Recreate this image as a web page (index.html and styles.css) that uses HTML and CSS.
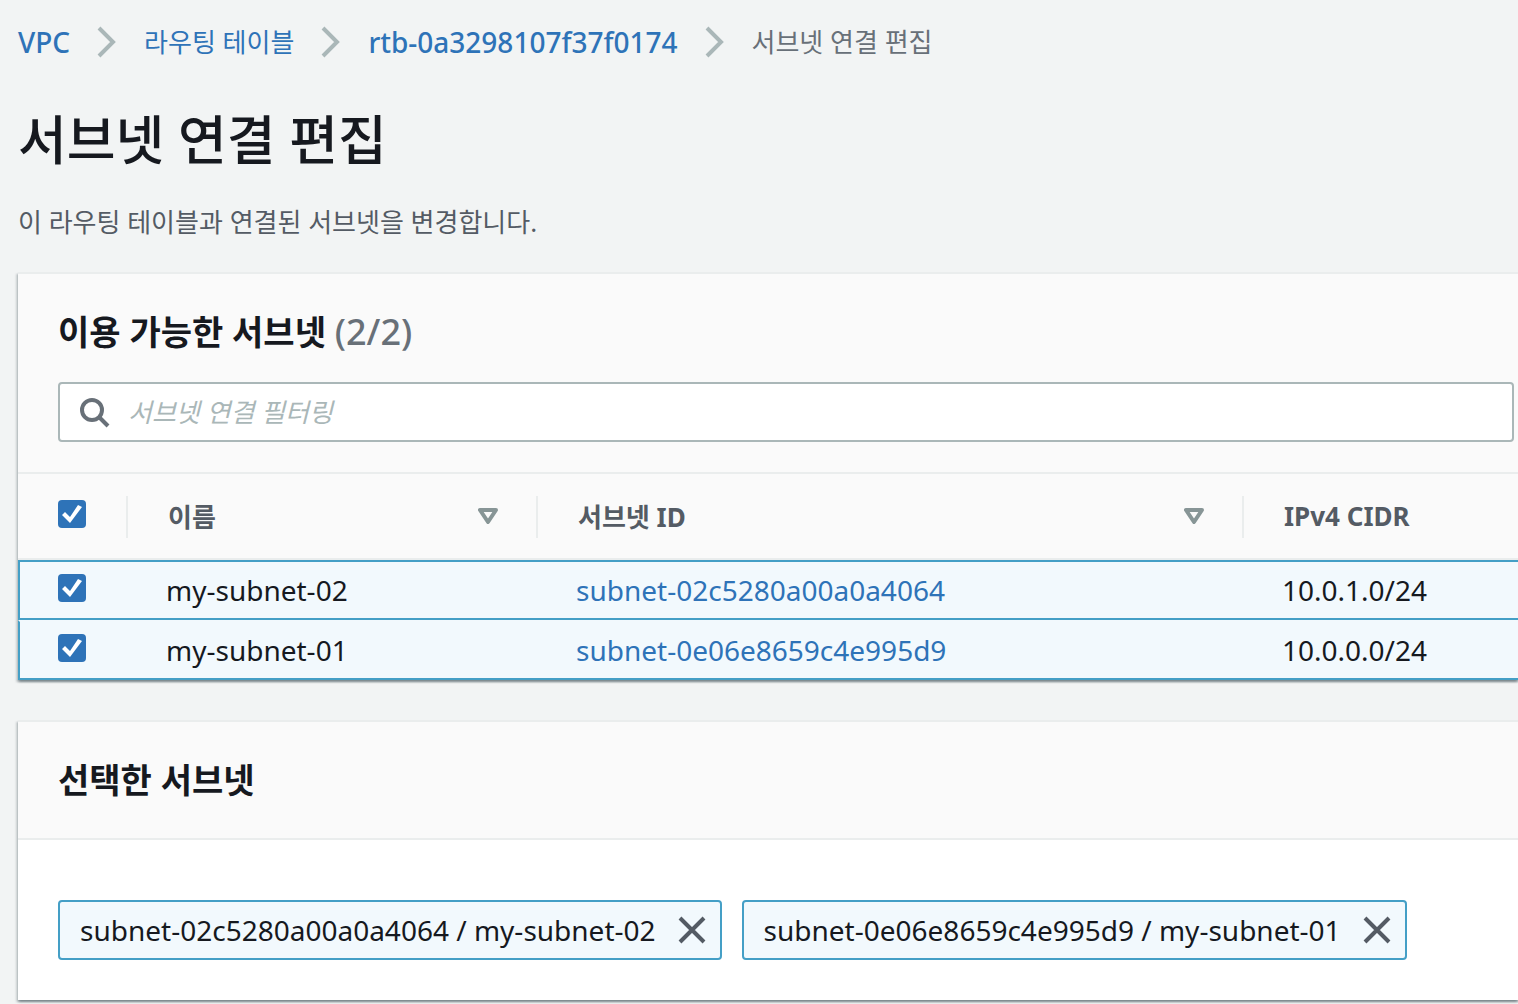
FILE: index.html
```html
<!DOCTYPE html>
<html lang="ko">
<head>
    <meta charset="UTF-8">
    <meta name="viewport" content="width=device-width, initial-scale=1.0">
    <title>서브넷 연결 편집</title>
    <link rel="stylesheet" href="styles.css">
</head>
<body>
    <nav class="breadcrumb">
        <a class="latin" href="#">VPC</a>
        <svg class="chevron" viewBox="0 0 20 32"><path d="M2 2 L16 16 L2 30"/></svg>
        <a href="#">라우팅 테이블</a>
        <svg class="chevron" viewBox="0 0 20 32"><path d="M2 2 L16 16 L2 30"/></svg>
        <a class="latin" href="#">rtb-0a3298107f37f0174</a>
        <svg class="chevron" viewBox="0 0 20 32"><path d="M2 2 L16 16 L2 30"/></svg>
        <span class="current">서브넷 연결 편집</span>
    </nav>

    <main class="content">
        <h1>서브넷 연결 편집</h1>
        <p class="description">이 라우팅 테이블과 연결된 서브넷을 변경합니다.</p>

        <section class="panel">
            <div class="panel-header">
                <h2>이용 가능한 서브넷 <span class="counter">(2/2)</span></h2>
                <label class="search">
                    <svg class="search-icon" viewBox="0 0 32 32">
                        <circle cx="14" cy="14" r="10"/>
                        <path d="M21 21 L30 30"/>
                    </svg>
                    <input type="text" placeholder="서브넷 연결 필터링" aria-label="서브넷 연결 필터링">
                </label>
            </div>
            <table class="subnets">
                <colgroup>
                    <col class="col-select">
                    <col class="col-name">
                    <col class="col-id">
                    <col>
                </colgroup>
                <thead>
                    <tr>
                        <th class="select"><input type="checkbox" class="checkbox" id="selectAll" aria-label="모두 선택" checked></th>
                        <th>
                            <button class="sort">이름
                                <svg class="sort-icon" viewBox="0 0 20 16"><path d="M2 2 H18 L10 14 Z"/></svg>
                            </button>
                        </th>
                        <th>
                            <button class="sort">서브넷 ID
                                <svg class="sort-icon" viewBox="0 0 20 16"><path d="M2 2 H18 L10 14 Z"/></svg>
                            </button>
                        </th>
                        <th>
                            <button class="sort">IPv4 CIDR</button>
                        </th>
                    </tr>
                </thead>
                <tbody>
                    <tr>
                        <td class="select"><input type="checkbox" class="checkbox" aria-label="my-subnet-02" checked></td>
                        <td>my-subnet-02</td>
                        <td><a href="#">subnet-02c5280a00a0a4064</a></td>
                        <td>10.0.1.0/24</td>
                    </tr>
                    <tr>
                        <td class="select"><input type="checkbox" class="checkbox" aria-label="my-subnet-01" checked></td>
                        <td>my-subnet-01</td>
                        <td><a href="#">subnet-0e06e8659c4e995d9</a></td>
                        <td>10.0.0.0/24</td>
                    </tr>
                </tbody>
            </table>
        </section>

        <section class="panel">
            <div class="panel-header">
                <h2>선택한 서브넷</h2>
            </div>
            <div class="tokens">
                <div class="token">
                    <span>subnet-02c5280a00a0a4064 / my-subnet-02</span>
                    <button class="remove" aria-label="제거">
                        <svg viewBox="0 0 28 28"><path d="M2 2 L26 26 M26 2 L2 26"/></svg>
                    </button>
                </div>
                <div class="token">
                    <span>subnet-0e06e8659c4e995d9 / my-subnet-01</span>
                    <button class="remove" aria-label="제거">
                        <svg viewBox="0 0 28 28"><path d="M2 2 L26 26 M26 2 L2 26"/></svg>
                    </button>
                </div>
            </div>
        </section>
    </main>
</body>
</html>
```
FILE: styles.css
```css
* {
    box-sizing: border-box;
}
body {
    margin: 0;
    background-color: #f2f4f4;
    color: #16191f;
    font-family: "Noto Sans", "Noto Sans CJK KR", sans-serif;
    font-size: 26px;
    line-height: 40px;
    overflow-x: hidden;
}
a {
    color: #2e73b8;
    text-decoration: none;
}
a:hover {
    text-decoration: underline;
}
svg {
    fill: none;
    flex: none;
}
.breadcrumb {
    display: flex;
    align-items: center;
    gap: 27px;
    padding: 22px 18px 0;
}
.latin {
    font-size: 28px;
    font-weight: 500;
}
.chevron {
    width: 20px;
    height: 32px;
    stroke: #aab7b8;
    stroke-width: 4;
}
.current {
    color: #687078;
}
.content {
    padding: 38px 0 0 18px;
}
h1 {
    margin: 0;
    font-size: 53px;
    font-weight: 500;
    line-height: 80px;
}
.description {
    margin: 22px 0 30px;
    color: #545b64;
}
.panel {
    margin-bottom: 40px;
    background-color: #fff;
    border-top: 2px solid #eaeded;
    box-shadow: 0 2px 2px 0 rgba(0, 28, 36, 0.3), 2px 2px 2px 0 rgba(0, 28, 36, 0.15), -2px 2px 2px 0 rgba(0, 28, 36, 0.15);
}
.panel-header {
    padding: 32px 4px 30px 40px;
    background-color: #fafafa;
    border-bottom: 2px solid #eaeded;
}
h2 {
    margin: 0;
    padding-bottom: 2px;
    font-size: 34px;
    font-weight: 700;
    line-height: 52px;
}
.counter {
    color: #687078;
    font-size: 36px;
    font-weight: 500;
}
.search {
    display: flex;
    align-items: center;
    gap: 18px;
    height: 60px;
    margin-top: 22px;
    padding: 0 18px;
    background-color: #fff;
    border: 2px solid #aab7b8;
    border-radius: 4px;
}
.search-icon {
    width: 32px;
    height: 32px;
    stroke: #687078;
    stroke-width: 4;
}
.search input {
    flex: 1;
    min-width: 0;
    padding: 0;
    border: none;
    outline: none;
    background: none;
    font: inherit;
}
.search input::placeholder {
    color: #aab7b8;
    font-style: italic;
}
.subnets {
    width: 100%;
    table-layout: fixed;
    border-collapse: separate;
    border-spacing: 0;
    text-align: left;
}
.col-select {
    width: 108px;
}
.col-name {
    width: 410px;
}
.col-id {
    width: 706px;
}
th {
    height: 86px;
    padding: 22px 0 20px;
    background-color: #fafafa;
    border-bottom: 2px solid #eaeded;
    vertical-align: top;
}
.sort {
    display: flex;
    align-items: center;
    justify-content: space-between;
    width: 100%;
    height: 42px;
    padding: 0 38px 2px 40px;
    border: none;
    border-left: 2px solid #eaeded;
    background: none;
    color: #545b64;
    font-family: inherit;
    font-size: 26px;
    font-weight: 700;
    cursor: pointer;
}
.sort-icon {
    width: 20px;
    height: 16px;
    stroke: #879596;
    stroke-width: 4;
    stroke-linejoin: round;
}
td {
    height: 60px;
    padding: 0 40px;
    background-color: #f2f9fd;
    border-top: 2px solid #f2f9fd;
    border-bottom: 2px solid #449fc6;
    font-size: 28px;
}
tbody tr:first-child td {
    border-top-color: #449fc6;
}
td.select {
    padding: 12px 0 0 38px;
    border-left: 2px solid #449fc6;
    vertical-align: top;
}
th.select {
    padding: 26px 0 0 40px;
}
.checkbox {
    appearance: none;
    display: block;
    width: 28px;
    height: 28px;
    margin: 0;
    border: 2px solid #aab7b8;
    border-radius: 4px;
    background-color: #fff;
}
.checkbox:checked {
    border: none;
    background-color: #2e73b8;
}
.checkbox:checked::before {
    content: "";
    display: block;
    width: 28px;
    height: 28px;
    background-color: #fff;
    clip-path: polygon(4px 15px, 7px 12px, 12px 17px, 20px 5px, 24px 7px, 12px 23px);
}
.tokens {
    display: flex;
    flex-wrap: wrap;
    gap: 20px;
    padding: 60px 40px 40px;
}
.token {
    display: flex;
    align-items: center;
    gap: 22px;
    height: 60px;
    padding: 0 14px 0 20px;
    background-color: #f2f9fd;
    border: 2px solid #449fc6;
    border-radius: 4px;
    font-size: 28px;
}
.remove {
    display: flex;
    padding: 0;
    border: none;
    background: none;
    cursor: pointer;
}
.remove svg {
    width: 28px;
    height: 28px;
    stroke: #545b64;
    stroke-width: 4;
}
```
